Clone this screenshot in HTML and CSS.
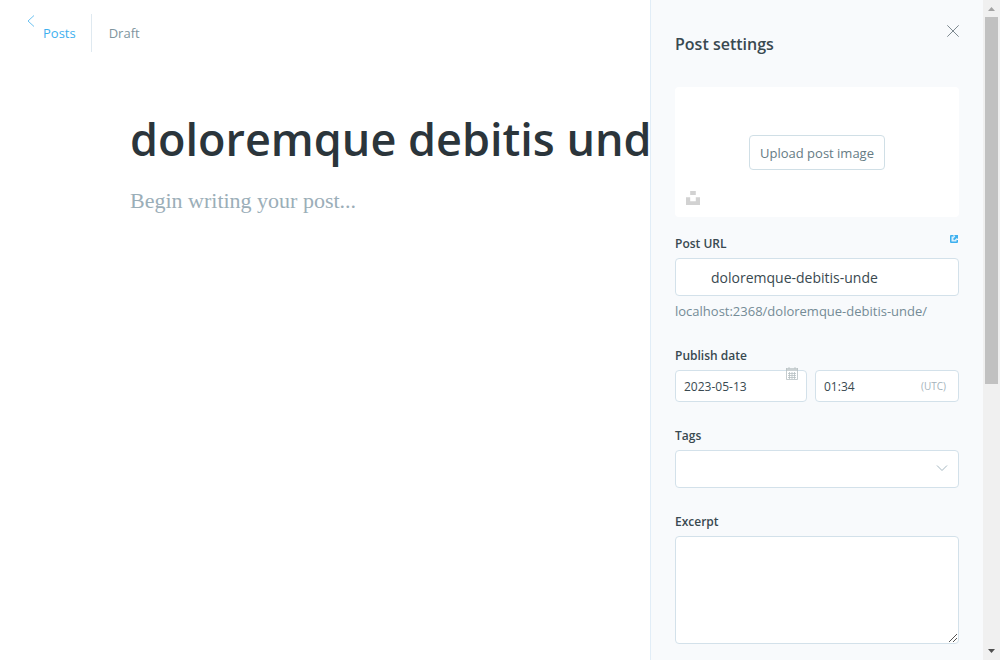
FILE: index.html
```html
<!DOCTYPE html>
<html lang="en">
<head>
<meta charset="utf-8">
<meta name="viewport" content="width=device-width, initial-scale=1">
<title>Post editor</title>
<link rel="stylesheet" href="styles.css">
</head>
<body>
<div class="app">
  <main class="editor">
    <header class="editor-header">
      <a class="back-link" href="#posts">
        <svg class="back-icon" viewBox="0 0 8 12" aria-hidden="true"><path d="M7 0.500 1 6l6 5.500"/></svg>
        <span class="back-text">Posts</span>
      </a>
      <span class="status">Draft</span>
    </header>
    <article class="editor-content">
      <h1 class="post-title">doloremque debitis unde</h1>
      <p class="post-body">Begin writing your post...</p>
    </article>
  </main>

  <aside class="settings">
    <form class="settings-content">
      <header class="settings-header">
        <h2 class="settings-title">Post settings</h2>
        <button class="close" type="button" aria-label="Close">
          <svg viewBox="0 0 12 12" aria-hidden="true"><path d="M0.300 0.300l11.400 11.400M11.700 0.300L0.300 11.700"/></svg>
        </button>
      </header>

      <div class="uploader">
        <button class="upload-button" type="button">Upload post image</button>
        <button class="unsplash" type="button" aria-label="Unsplash">
          <svg viewBox="0 0 14 14" aria-hidden="true"><path d="M4.200 0h5.600v4H4.200zM0 6.200h4.200v4h5.600v-4H14V14H0z"/></svg>
        </button>
      </div>

      <div class="field">
        <div class="label-row">
          <label for="url">Post URL</label>
          <a class="view-link" href="#view" aria-label="View post">
            <svg viewBox="0 0 8 8" aria-hidden="true"><path class="view-fill" d="M1 1h6v6H1z"/><path class="view-box" d="M1 0h2.500v1.500H1.500v5h5V5H8v2a1 1 0 0 1-1 1H1a1 1 0 0 1-1-1V1a1 1 0 0 1 1-1z"/><path class="view-box" d="M4 0h4v4L6.700 2.900 4.300 5.200 3 3.900l2.300-2.500z"/></svg>
          </a>
        </div>
        <input class="control url-input" id="url" type="text" value="doloremque-debitis-unde">
        <p class="hint">localhost:2368/doloremque-debitis-unde/</p>
      </div>

      <div class="field">
        <label for="date">Publish date</label>
        <div class="date-row">
          <div class="date-box">
            <input class="control small-input" id="date" type="text" value="2023-05-13">
            <svg class="calendar" viewBox="0 0 12 13" aria-hidden="true"><path class="cal-head" d="M0 1h12v3H0z"/><path d="M0.500 1v11.500h11V1M3 0v2M9 0v2M2 6.500h8M2 8.500h8M2 10.500h8M3.500 5v7M6 5v7M8.500 5v7"/></svg>
          </div>
          <div class="control time-box">
            <input class="time-input" type="text" value="01:34" aria-label="Publish time">
            <span class="timezone">(UTC)</span>
          </div>
        </div>
      </div>

      <div class="field">
        <label for="tags">Tags</label>
        <div class="select-box">
          <select class="control" id="tags"><option value=""></option></select>
          <svg class="chevron" viewBox="0 0 12 8" aria-hidden="true"><path d="M1 1.500l5 5 5-5"/></svg>
        </div>
      </div>

      <div class="field">
        <label for="excerpt">Excerpt</label>
        <div class="excerpt-box">
          <textarea class="control excerpt" id="excerpt"></textarea>
          <svg class="grip" viewBox="0 0 8 8" aria-hidden="true"><path d="M0 8L8 0M4 8l4-4"/></svg>
        </div>
      </div>
    </form>
    <div class="scrollbar" aria-hidden="true">
      <svg class="scroll-arrow up" viewBox="0 0 17 17"><path d="M5 11h7L8.500 7z"/></svg>
      <div class="track"><div class="thumb"></div></div>
      <svg class="scroll-arrow down" viewBox="0 0 17 17"><path d="M5 6h7L8.500 10z"/></svg>
    </div>
  </aside>
</div>
</body>
</html>
```

FILE: styles.css
```css
* {
  box-sizing: border-box;
}

body {
  margin: 0;
  background: #fff;
  color: #394950;
  font-family: "Segoe UI", "Open Sans", "Noto Sans", sans-serif;
  font-size: 13px;
}

h1, h2, p {
  margin: 0;
}

button, input, select, textarea {
  margin: 0;
  font: inherit;
  color: inherit;
}

svg {
  display: block;
  fill: none;
}

.app {
  display: flex;
  height: 100vh;
  overflow: hidden;
}

/* Editor */
.editor {
  flex: 1;
  min-width: 0;
  overflow: hidden;
}

.editor-header {
  display: flex;
  padding: 14px 27px;
  line-height: 38px;
}

.back-link {
  display: flex;
  gap: 8px;
  padding-right: 15px;
  border-right: 1px solid #dfe9f0;
  color: #3eb0ef;
  text-decoration: none;
}

.back-icon {
  width: 8px;
  height: 12px;
  margin-top: 1px;
  stroke: #6cc1f0;
}

.status {
  padding-left: 17px;
  color: #7f959e;
}

.editor-content {
  padding: 41px 0 0 130px;
}

.post-title {
  color: #2b353b;
  font-size: 45px;
  font-weight: 600;
  line-height: 64px;
  white-space: nowrap;
}

.post-body {
  margin-top: 14px;
  color: #9baeb8;
  font-family: Georgia, "Liberation Serif", serif;
  font-size: 22px;
  line-height: 32px;
}

/* Settings panel */
.settings {
  display: flex;
  flex: 0 0 350px;
  border-left: 1px solid #e1edf7;
  background: #f8fafc;
}

.settings-content {
  flex: 1;
  min-width: 0;
  padding: 24px;
  overflow: hidden;
}

.settings-header {
  display: flex;
  justify-content: space-between;
  align-items: flex-start;
  height: 63px;
}

.settings-title {
  font-size: 16px;
  font-weight: 600;
  line-height: 40px;
}

.close {
  padding: 1px 0 0;
  border: 0;
  background: none;
}

.close svg {
  width: 12px;
  height: 12px;
  stroke: #5d6c74;
  stroke-width: 0.8;
}

.uploader {
  position: relative;
  display: flex;
  align-items: center;
  justify-content: center;
  height: 130px;
  margin-bottom: 17px;
  border-radius: 4px;
  background: #fff;
}

.upload-button {
  height: 35px;
  padding: 1px 10px 0;
  border: 1px solid #d0dfe6;
  border-radius: 4px;
  background: #fff;
  color: #667b84;
}

.unsplash {
  position: absolute;
  bottom: 12px;
  left: 11px;
  padding: 0;
  border: 0;
  background: none;
}

.unsplash svg {
  width: 14px;
  height: 14px;
  fill: #d2d2d2;
}

.field {
  margin-bottom: 24px;
}

label {
  display: block;
  margin-bottom: 4px;
  font-size: 12px;
  font-weight: 600;
  line-height: 20px;
}

.label-row {
  display: flex;
  justify-content: space-between;
}

.view-link {
  padding: 1px 1px 0 0;
}

.view-link svg {
  width: 8px;
  height: 8px;
}

.view-box {
  fill: #3eb0ef;
}

.view-fill {
  fill: #d8effb;
}

.control {
  display: block;
  width: 100%;
  height: 38px;
  border: 1px solid #d3e1ea;
  border-radius: 4px;
  background: #fff;
  outline: 0;
}

.url-input {
  padding: 0 12px 0 35px;
  font-size: 14px;
}

.hint {
  margin-top: 5px;
  color: #748b96;
  font-size: 13px;
  line-height: 21px;
  white-space: nowrap;
}

.date-row {
  display: grid;
  grid-template-columns: minmax(0, 11fr) minmax(0, 12fr);
  gap: 8px;
}

.date-box, .select-box, .excerpt-box {
  position: relative;
}

.small-input {
  height: 32px;
  padding: 0 8px;
  font-size: 12px;
}

.calendar {
  position: absolute;
  top: -3px;
  right: 9px;
  width: 12px;
  height: 13px;
  stroke: #b7c0c3;
  stroke-width: 0.8;
}

.cal-head {
  fill: #cbd2d4;
  stroke: none;
}

.time-box {
  display: flex;
  align-items: center;
  height: 32px;
  padding: 0 12px 0 8px;
}

.time-input {
  flex: 1;
  min-width: 0;
  padding: 0;
  border: 0;
  background: none;
  font-size: 12px;
  outline: 0;
}

.timezone {
  color: #a5b3bb;
  font-size: 10px;
}

select.control {
  appearance: none;
  padding: 0 32px 0 12px;
}

.chevron {
  position: absolute;
  top: 14px;
  right: 11px;
  width: 12px;
  height: 8px;
  stroke: #a5b7c1;
  pointer-events: none;
}

.excerpt {
  height: 108px;
  padding: 8px 12px;
  resize: none;
}

.grip {
  position: absolute;
  right: 2px;
  bottom: 2px;
  width: 8px;
  height: 8px;
  stroke: #555;
  pointer-events: none;
}

/* Scrollbar */
.scrollbar {
  display: flex;
  flex: 0 0 17px;
  flex-direction: column;
  background: #f0f0f0;
}

.scroll-arrow {
  flex: none;
  width: 17px;
  height: 17px;
}

.up {
  fill: #a3a3a3;
}

.down {
  fill: #505050;
}

.track {
  flex: 1;
  padding: 0 2px;
}

.thumb {
  height: 58.6%;
  background: #c1c1c1;
}
```
